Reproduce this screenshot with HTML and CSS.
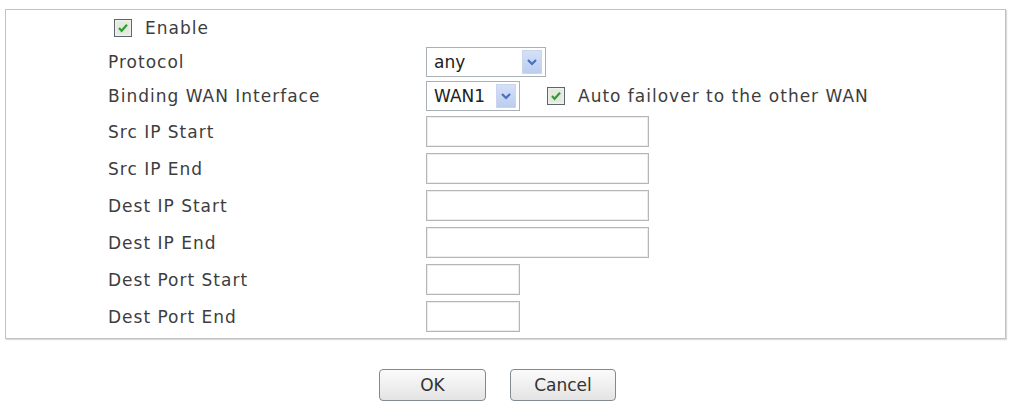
FILE: index.html
```html
<!DOCTYPE html>
<html>
<head>
<meta charset="utf-8">
<link rel="stylesheet" href="styles.css">
</head>
<body>
<div class="top"><span class="title">Index 1</span></div>
<div class="box">
  <div class="row r-enable">
    <div class="enable">
      <span class="cb"><svg width="18" height="18" viewBox="0 0 18 18"><rect x="0.5" y="0.5" width="17" height="17" fill="#eef1ea" stroke="#5a6670"/><rect x="2.5" y="2.5" width="13" height="13" fill="#e3e9dd"/><path d="M5 9 L7.6 11.8 L13 5.8" fill="none" stroke="#2f9e35" stroke-width="2.2"/></svg></span>
      <span>Enable</span>
    </div>
  </div>
  <div class="row r-proto">
    <div class="label">Protocol</div>
    <div class="ctrl"><span class="select w119"><span class="val">any</span><span class="btn"><svg width="12" height="8" viewBox="0 0 12 8"><path d="M2 2 L6 6 L10 2" fill="none" stroke="#4a6ec0" stroke-width="2.2"/></svg></span></span></div>
  </div>
  <div class="row r-wan">
    <div class="label">Binding WAN Interface</div>
    <div class="ctrl">
      <span class="select w93"><span class="val">WAN1</span><span class="btn"><svg width="12" height="8" viewBox="0 0 12 8"><path d="M2 2 L6 6 L10 2" fill="none" stroke="#4a6ec0" stroke-width="2.2"/></svg></span></span>
      <span class="cb cb2"><svg width="18" height="18" viewBox="0 0 18 18"><rect x="0.5" y="0.5" width="17" height="17" fill="#eef1ea" stroke="#5a6670"/><rect x="2.5" y="2.5" width="13" height="13" fill="#e3e9dd"/><path d="M5 9 L7.6 11.8 L13 5.8" fill="none" stroke="#2f9e35" stroke-width="2.2"/></svg></span>
      <span class="fail">Auto failover to the other WAN</span>
    </div>
  </div>
  <div class="row"><div class="label">Src IP Start</div><div class="ctrl"><span class="input wide"></span></div></div>
  <div class="row"><div class="label">Src IP End</div><div class="ctrl"><span class="input wide"></span></div></div>
  <div class="row"><div class="label">Dest IP Start</div><div class="ctrl"><span class="input wide"></span></div></div>
  <div class="row"><div class="label">Dest IP End</div><div class="ctrl"><span class="input wide"></span></div></div>
  <div class="row"><div class="label">Dest Port Start</div><div class="ctrl"><span class="input narrow"></span></div></div>
  <div class="row"><div class="label">Dest Port End</div><div class="ctrl"><span class="input narrow"></span></div></div>
</div>
<div class="buttons">
  <span class="button ok">OK</span>
  <span class="button cancel">Cancel</span>
</div>
</body>
</html>
```

FILE: styles.css
```css
html, body {
  margin: 0;
  padding: 0;
  background: #ffffff;
}
body {
  font-family: "DejaVu Sans", Verdana, sans-serif;
  font-size: 17px;
  letter-spacing: 1px;
  color: #3d3d3d;
  width: 1009px;
  height: 401px;
  overflow: hidden;
}
.top {
  height: 9px;
  overflow: hidden;
  padding-left: 16px;
}
.title {
  display: block;
  margin-top: -13px;
  color: #eab0b0;
  font-size: 15px;
  line-height: 16px;
}
.box {
  margin-left: 5px;
  width: 999px;
  height: 327px;
  border: 1px solid #c2c2c2;
  box-shadow: 1px 1px 1px #dadada;
  padding-top: 1px;
  box-sizing: content-box;
}
.row {
  display: flex;
  align-items: center;
  height: 37px;
  padding-left: 102px;
}
.row.r-enable { height: 34px; }
.row.r-proto { height: 33px; }
.row.r-wan { height: 35px; }
.enable {
  display: flex;
  align-items: center;
  padding-left: 6px;
  gap: 13px;
}
.cb {
  display: inline-flex;
  width: 18px;
  height: 18px;
}
.label {
  width: 318px;
  flex: none;
}
.ctrl {
  display: flex;
  align-items: center;
}
.select {
  display: inline-flex;
  align-items: center;
  justify-content: space-between;
  height: 30px;
  border: 1px solid #a9b0b6;
  box-sizing: border-box;
  background: #fff;
  padding: 2px 3px 2px 2px;
  letter-spacing: 0;
}
.select .val {
  padding-left: 5px;
  color: #222;
}
.w119 { width: 120px; }
.w93 { width: 94px; }
.btn {
  display: inline-flex;
  align-items: center;
  justify-content: center;
  width: 20px;
  height: 24px;
  background: linear-gradient(#d3e0f7, #bccdf0);
  border: 1px solid #c9d5ee;
  box-sizing: border-box;
}
.cb2 {
  margin-left: 27px;
  margin-right: 13px;
}
.input {
  display: inline-block;
  height: 31px;
  border: 1px solid #b3b7ba;
  box-shadow: inset 0 0 0 1px #ececec;
  box-sizing: border-box;
  background: #fff;
}
.wide { width: 223px; }
.narrow { width: 94px; }
.buttons {
  display: flex;
  gap: 24px;
  padding-left: 379px;
  margin-top: 30px;
}
.button {
  display: inline-flex;
  align-items: center;
  justify-content: center;
  height: 32px;
  border: 1px solid #7f8a92;
  border-radius: 4px;
  box-sizing: border-box;
  background: linear-gradient(#fbfbfb, #e4e4e4);
  color: #333;
  font-size: 17px;
  letter-spacing: 0;
}
.ok { width: 107px; }
.cancel { width: 106px; }
```
